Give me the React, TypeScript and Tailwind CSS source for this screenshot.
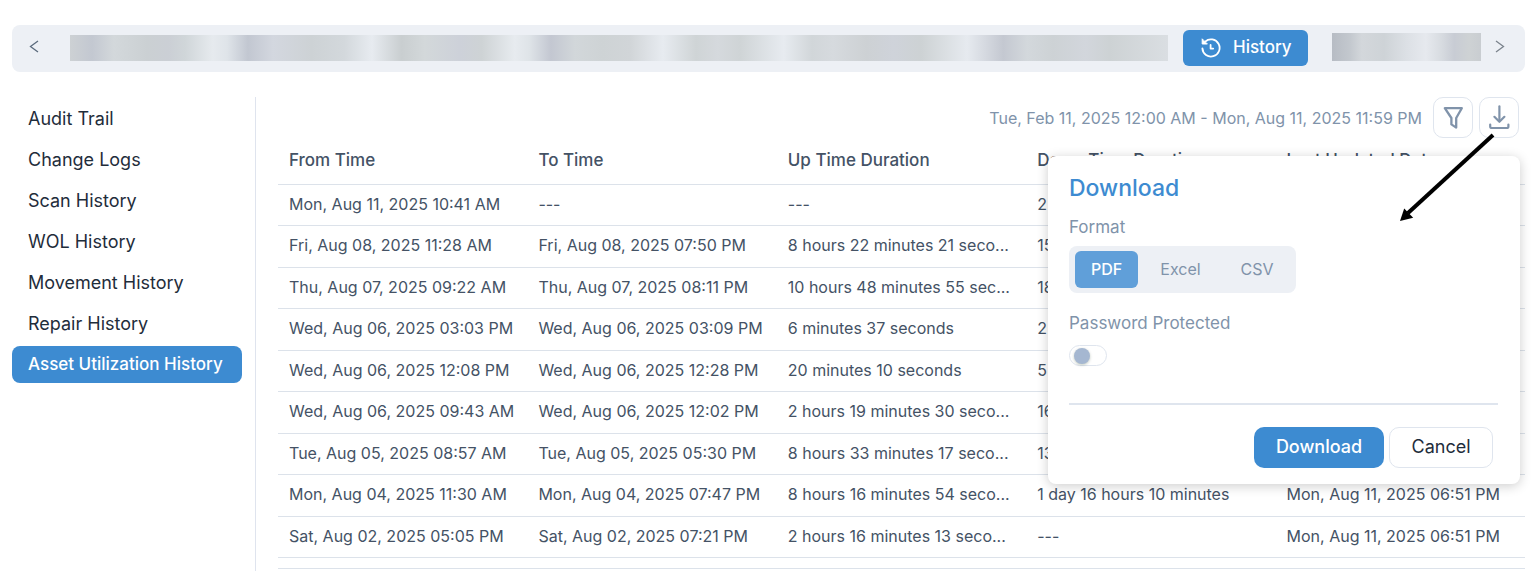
import React from 'react';

const SIDE_LINKS = [
  'Audit Trail',
  'Change Logs',
  'Scan History',
  'WOL History',
  'Movement History',
  'Repair History',
  'Asset Utilization History',
];

const COLUMNS = ['From Time', 'To Time', 'Up Time Duration', 'Down Time Duration', 'Last Updated Date'];

const UPDATED = 'Mon, Aug 11, 2025 06:51 PM';

const ROWS = [
  ['Mon, Aug 11, 2025 10:41 AM', '---', '---', '2 days', UPDATED],
  ['Fri, Aug 08, 2025 11:28 AM', 'Fri, Aug 08, 2025 07:50 PM', '8 hours 22 minutes 21 seco...', '15 hours', UPDATED],
  ['Thu, Aug 07, 2025 09:22 AM', 'Thu, Aug 07, 2025 08:11 PM', '10 hours 48 minutes 55 sec...', '18 hours', UPDATED],
  ['Wed, Aug 06, 2025 03:03 PM', 'Wed, Aug 06, 2025 03:09 PM', '6 minutes 37 seconds', '2 hours', UPDATED],
  ['Wed, Aug 06, 2025 12:08 PM', 'Wed, Aug 06, 2025 12:28 PM', '20 minutes 10 seconds', '5 minutes', UPDATED],
  ['Wed, Aug 06, 2025 09:43 AM', 'Wed, Aug 06, 2025 12:02 PM', '2 hours 19 minutes 30 seco...', '16 hours', UPDATED],
  ['Tue, Aug 05, 2025 08:57 AM', 'Tue, Aug 05, 2025 05:30 PM', '8 hours 33 minutes 17 seco...', '13 hours', UPDATED],
  ['Mon, Aug 04, 2025 11:30 AM', 'Mon, Aug 04, 2025 07:47 PM', '8 hours 16 minutes 54 seco...', '1 day 16 hours 10 minutes', UPDATED],
  ['Sat, Aug 02, 2025 05:05 PM', 'Sat, Aug 02, 2025 07:21 PM', '2 hours 16 minutes 13 seco...', '---', UPDATED],
];

type Stop = [string, number];

// Colour and position (%) of each smudge in the masked tabs
const LEFT_TABS: Stop[] = [
  ['#cdd1d4', 0], ['#c3c8d1', 2], ['#d3d8db', 4], ['#cbd0d3', 7], ['#cbcfd5', 9], ['#d0d6d9', 10.5],
  ['#e6eaee', 13], ['#dfe4e9', 14.3], ['#c2c7d1', 16.2], ['#d3d7df', 18.5], ['#cdd2d5', 22], ['#d3d8dc', 25],
  ['#e7ebf0', 27.5], ['#c9ced0', 30.2], ['#d3d8da', 32.3], ['#cdd1d9', 35.5], ['#ced3d5', 37.5], ['#e7ebef', 40.5],
  ['#dfe4e8', 41.8], ['#c3c7d1', 43.8], ['#d2d7da', 46], ['#ced3d5', 48.5], ['#d1d5d8', 51], ['#e7ebf0', 54],
  ['#cfd4d6', 57], ['#d5d9dd', 59], ['#cfd4d6', 61], ['#e7ebf0', 65], ['#d1d6d9', 67.6], ['#d6dade', 69.5],
  ['#cdd1d4', 72.5], ['#cfd3da', 75], ['#cdd2d4', 77.5], ['#e6eaef', 81.7], ['#c4c8d1', 85], ['#d3d8dc', 87.2],
  ['#cdd2d5', 89.5], ['#d2d6dc', 92.5], ['#cdd2d4', 94.7], ['#dadee2', 100],
];

const RIGHT_TABS: Stop[] = [
  ['#b7bcc4', 0], ['#c3c8ce', 12], ['#d3d7db', 20], ['#ced3d7', 35], ['#dce0e5', 50],
  ['#e6e9ee', 63], ['#d8dce1', 73], ['#c8ccd4', 82], ['#ced2d4', 92], ['#c9cdd1', 100],
];

const gradient = (stops: Stop[]) =>
  `linear-gradient(90deg, ${stops.map(([color, at]) => `${color} ${at}%`).join(', ')})`;

const HistoryIcon = () => (
  <svg width="20" height="20" viewBox="0 0 20 20" fill="none" stroke="currentColor" strokeWidth="1.8" strokeLinecap="round" strokeLinejoin="round">
    <path d="M1.4 10.4A8.6 8.6 0 1 0 4.2 3.6" />
    <path d="M1.2 1.2V6H6Z" fill="currentColor" strokeWidth="1" />
    <path d="M9.6 7V10.6H12.2" />
  </svg>
);

const FilterIcon = () => (
  <svg width="22" height="24" viewBox="0 0 22 24" fill="none" stroke="currentColor" strokeWidth="2.3" strokeLinejoin="round">
    <path d="M2.8 2.2H19.8L14.2 12V21.6L9.4 18.4V12Z" />
  </svg>
);

const DownloadIcon = () => (
  <svg width="22" height="26" viewBox="0 0 22 26" fill="none" stroke="currentColor" strokeWidth="2.2" strokeLinecap="round" strokeLinejoin="round">
    <path d="M11.4 1.4V16" />
    <path d="M6.4 11.8L11.4 16.8L16.4 11.8" />
    <path d="M2.2 19.6V21.4Q2.2 23 4 23H18.6Q20.4 23 20.4 21.4V19.6" />
  </svg>
);

const TopBar = () => (
  <nav className="flex h-[47px] items-center rounded-lg bg-[#edf0f5] pr-5 pb-[2px] pl-4">
    <button type="button" aria-label="Scroll left" className="mb-[2px] text-[#5b6b7d]">
      <svg width="12" height="14" viewBox="0 0 12 14" fill="none" stroke="currentColor" strokeWidth="1.3">
        <path d="M10 1L2.5 6.5L10 12" />
      </svg>
    </button>
    <div className="mr-[15px] ml-[30px] h-[26px] flex-1" style={{ background: gradient(LEFT_TABS) }}></div>
    <button type="button" className="flex h-9 w-[125px] items-center rounded-md bg-[#3d8bd1] pl-[18px] text-[17px] font-medium text-white">
      <HistoryIcon />
      <span className="ml-3">History</span>
    </button>
    <div className="mr-3 mb-[2px] ml-6 h-7 w-[149px]" style={{ background: gradient(RIGHT_TABS) }}></div>
    <button type="button" aria-label="Scroll right" className="mb-[2px] text-[#7b838c]">
      <svg width="12" height="14" viewBox="0 0 12 14" fill="none" stroke="currentColor" strokeWidth="1.3">
        <path d="M3 1L10.5 6.5L3 12" />
      </svg>
    </button>
  </nav>
);

const Sidebar = () => (
  <aside className="w-[244px] shrink-0 border-r border-[#dfe4ee] pt-[3px] pr-[13px]">
    <ul className="flex flex-col gap-1">
      {SIDE_LINKS.map((label, idx) => {
        const active = idx === SIDE_LINKS.length - 1;
        return (
          <li key={label}>
            <a
              href="#"
              className={`flex h-[37px] items-center rounded-lg pl-4 whitespace-nowrap ${active ? 'bg-[#3d8bd1] text-[17px] font-medium text-white' : 'text-lg text-[#1f2d3b]'}`}
            >
              {label}
            </a>
          </li>
        );
      })}
    </ul>
  </aside>
);

const HistoryTable = () => (
  <table className="w-full table-fixed border-collapse text-left text-base text-[#445265]">
    <thead>
      <tr className="h-[46px] border-b border-[#dce2ea]">
        {COLUMNS.map((column) => (
          <th key={column} className="px-[11px] py-0 text-[17px] font-medium whitespace-nowrap">{column}</th>
        ))}
      </tr>
    </thead>
    <tbody>
      {ROWS.map((row, idx) => (
        <tr key={idx} className="h-[41px] border-b border-[#dce2ea] even:h-[42px]">
          {row.map((cell, cIdx) => (
            <td key={cIdx} className="px-[11px] pt-0 pb-[2px] whitespace-nowrap">{cell}</td>
          ))}
        </tr>
      ))}
    </tbody>
  </table>
);

const DownloadPanel = () => (
  <form className="absolute top-[59px] right-[5px] h-[328px] w-[472px] rounded-lg bg-white pr-[22px] pl-[21px] shadow-[0_2px_12px_rgba(0,0,0,0.2)]">
    <h2 className="pt-4 text-[23px] leading-8 font-medium text-[#3d8bd1]">Download</h2>

    <fieldset className="text-base text-[#8093aa]">
      <legend className="h-[42px] pt-[11px] text-[17px] leading-6">Format</legend>
      <div className="flex h-[47px] w-[227px] items-center rounded-lg bg-[#edf0f5] pb-[1px] pl-[6px]">
        <label className="flex h-[37px] w-[63px] items-center justify-center rounded-md has-checked:bg-[#609fd9] has-checked:font-medium has-checked:text-white">
          <input type="radio" name="format" defaultChecked className="sr-only" />
          PDF
        </label>
        <label className="flex h-[37px] w-[85px] items-center justify-center">
          <input type="radio" name="format" className="sr-only" />
          Excel
        </label>
        <label className="flex h-[37px] w-[68px] items-center justify-center">
          <input type="radio" name="format" className="sr-only" />
          CSV
        </label>
      </div>
    </fieldset>

    <label htmlFor="password-protected" className="mt-[18px] block text-[17px] leading-6 text-[#8093aa]">Password Protected</label>
    <input
      id="password-protected"
      type="checkbox"
      role="switch"
      className="mt-[10px] flex h-[21px] w-[38px] appearance-none items-center rounded-full border border-[#dfe5ee] pl-1 before:size-4 before:rounded-full before:bg-[#a5b7d1] before:shadow-[0_1px_3px_rgba(0,40,0,0.25)]"
    />

    <div className="mt-[37px] flex gap-[5px] border-t-2 border-[#dfe5ee] pt-[22px]">
      <button type="button" className="ml-auto h-[41px] w-[130px] rounded-[10px] bg-[#3d8bd1] pb-[2px] text-lg font-medium text-white">Download</button>
      <button type="button" className="mr-[5px] h-[41px] w-[104px] rounded-[10px] border border-[#dfe5ee] pb-[2px] text-lg text-[#1f2d3b]">Cancel</button>
    </div>

    {/* Pointer from the toolbar button to the panel */}
    <svg className="pointer-events-none absolute -top-6 right-6" width="100" height="92" viewBox="0 0 100 92">
      <path d="M97 3L12 81" stroke="#000" strokeWidth="4" fill="none" />
      <path d="M4 89L8.2 76.5L17.2 85.8Z" fill="#000" />
    </svg>
  </form>
);

export default function App() {
  return (
    <div className="flex min-h-screen flex-col bg-white pt-[25px] pr-[9px] pl-3 font-['Inter',sans-serif]">
      <TopBar />
      <div className="mt-[25px] flex flex-1">
        <Sidebar />
        <main className="relative ml-[22px] min-w-0 flex-1">
          <div className="flex h-[41px] items-center justify-end gap-[6px] pr-[6px] text-[#8093aa]">
            <span className="mr-[5px] text-base">Tue, Feb 11, 2025 12:00 AM - Mon, Aug 11, 2025 11:59 PM</span>
            <button type="button" aria-label="Filter" className="flex h-[41px] w-10 items-center justify-center rounded-[10px] border border-[#dfe5ee]">
              <FilterIcon />
            </button>
            <button type="button" aria-label="Download" className="flex h-[41px] w-10 items-center justify-center rounded-[10px] border border-[#dfe5ee]">
              <DownloadIcon />
            </button>
          </div>
          <HistoryTable />
          <div className="h-[11px] border-b border-[#dce2ea]"></div>
          <DownloadPanel />
        </main>
      </div>
    </div>
  );
}
